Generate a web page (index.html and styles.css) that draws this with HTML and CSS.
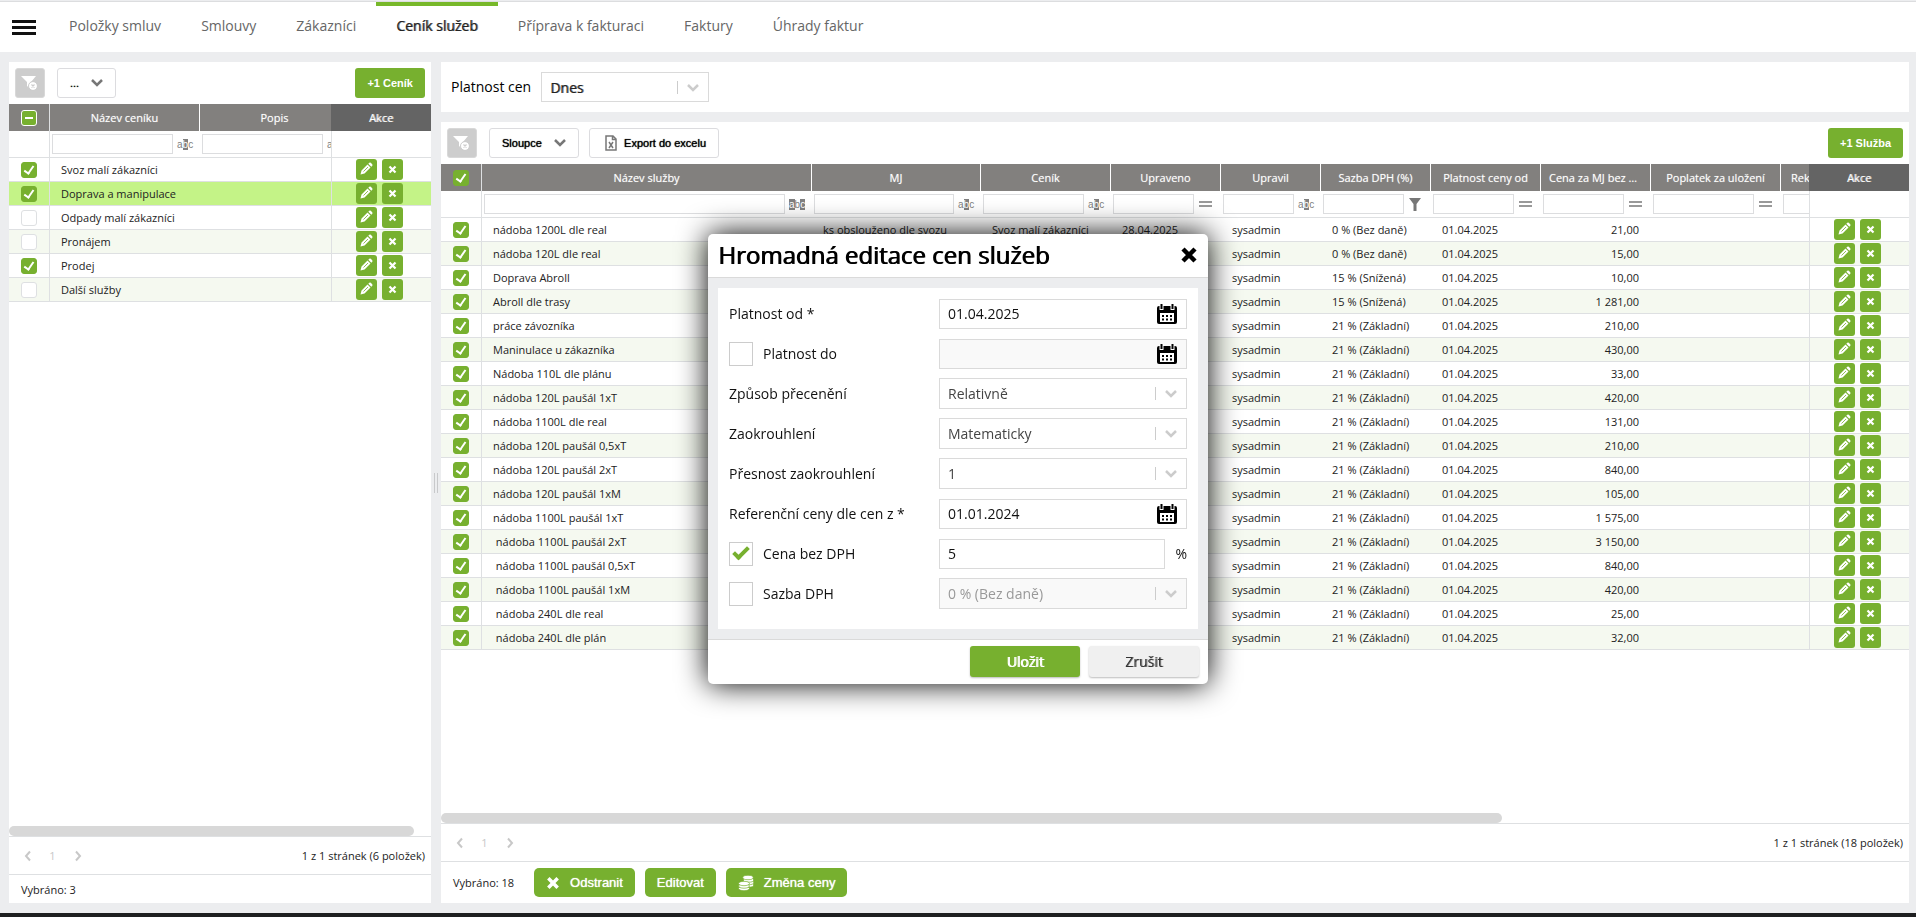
FILE: index.html
```html
<!DOCTYPE html>
<html lang="cs">
<head>
<meta charset="utf-8">
<title>Ceník služeb</title>
<link rel="stylesheet" href="styles.css">
</head>
<body>
<svg class="sprite" aria-hidden="true">
  <symbol id="i-pencil" viewBox="0 0 21 21"><path d="M4.500 15.500l1-4 6-6 3 3-6 6zM12.300 4.700l1-1q.8-.5 1.500.1l1.400 1.400q.6.700.1 1.500l-1 1z" fill="#fff"/><path d="M7.500 12.500l4.500-4.500" stroke="#77b02f" stroke-width=".8"/></symbol>
  <symbol id="i-cross" viewBox="0 0 12 12"><path d="M2 2l8 8M10 2l-8 8" stroke="currentColor" stroke-width="3"/></symbol>
  <symbol id="i-chevron" viewBox="0 0 12 8"><path d="M1 1l5 5 5-5" fill="none" stroke="currentColor" stroke-width="2.500"/></symbol>
  <symbol id="i-left" viewBox="0 0 8 12"><path d="M6 1.500L2 6l4 4.500" fill="none" stroke="currentColor" stroke-width="2"/></symbol>
  <symbol id="i-right" viewBox="0 0 8 12"><path d="M2 1.500L6 6l-4 4.500" fill="none" stroke="currentColor" stroke-width="2"/></symbol>
  <symbol id="i-clear" viewBox="0 0 18 16"><path d="M0 1h15l-5 6v7l-4-3V7z" fill="#fff"/><circle cx="12" cy="11" r="4" fill="#fff"/><circle cx="12" cy="11" r="4.500" fill="none" stroke="#cdcdcd"/><path d="M10.500 9.500l3 3m0-3l-3 3" stroke="#cdcdcd" stroke-width="1.200"/></symbol>
  <symbol id="i-funnel" viewBox="0 0 14 13" preserveAspectRatio="xMinYMid"><path d="M1 0h12L8.500 6v7h-3V6z" fill="#777"/></symbol>
  <symbol id="i-equals" viewBox="0 0 14 8" preserveAspectRatio="xMinYMid"><path d="M1 2h13M1 6h13" stroke="#999" stroke-width="2"/></symbol>
  <symbol id="i-excel" viewBox="0 0 12 16"><path d="M1 1h7l3 3v11H1zM7.500 1v3.500H11" fill="none" stroke="#777" stroke-width="1.500"/><path d="M4 7l4 6M8 7l-4 6" stroke="#777" stroke-width="1.500"/></symbol>
  <symbol id="i-coins" viewBox="0 0 16 16"><g fill="#fff" stroke="#77b02f" stroke-width=".7"><ellipse cx="10.500" cy="10" rx="5.200" ry="2.200"/><ellipse cx="10.500" cy="7.500" rx="5.200" ry="2.200"/><ellipse cx="10.500" cy="5" rx="5.200" ry="2.200"/><ellipse cx="10" cy="2.500" rx="5.200" ry="2.200"/><ellipse cx="6" cy="13.500" rx="5.500" ry="2.200"/><ellipse cx="6" cy="11" rx="5.500" ry="2.200"/><ellipse cx="6" cy="8.500" rx="5.500" ry="2.200"/></g></symbol>
  <symbol id="i-calendar" viewBox="0 0 20 20"><path d="M2 2h16q2 0 2 2v14q0 2-2 2H2q-2 0-2-2V4q0-2 2-2z"/><path d="M2.500 0h4v6h-4zM13.500 0h4v6h-4z" fill="#fff"/><path d="M3.500 0h2v5h-2zM14.500 0h2v5h-2z"/><path d="M3 9h14v9H3z" fill="#fff"/><path d="M5 11h2v2H5zm4 0h2v2H9zm4 0h2v2h-2zM5 14.500h2v2H5zm4 0h2v2H9zm4 0h2v2h-2z"/></symbol>
</svg>

<header class="topbar">
  <button class="menu" aria-label="Menu"><span></span><span></span><span></span></button>
  <nav class="tabs">
    <a href="#">Položky smluv</a>
    <a href="#">Smlouvy</a>
    <a href="#">Zákazníci</a>
    <a href="#" class="active" aria-current="page">Ceník služeb</a>
    <a href="#">Příprava k fakturaci</a>
    <a href="#">Faktury</a>
    <a href="#">Úhrady faktur</a>
  </nav>
</header>

<main class="workspace">
  <section class="panel sidebar">
    <div class="toolbar">
      <button class="clear" aria-label="Zrušit filtr" disabled><svg width="18" height="16"><use href="#i-clear"/></svg></button>
      <button class="drop compact">... <svg width="12" height="8"><use href="#i-chevron"/></svg></button>
      <button class="add">+1 Ceník</button>
    </div>
    <div class="gridbox">
      <div class="gridscroll">
        <table class="grid" id="pricelists">
          <colgroup><col class="w41"><col class="w150"><col class="w150"></colgroup>
          <thead>
            <tr><th><input type="checkbox" class="tick partial" aria-label="Vybrat vše"></th><th>Název ceníku</th><th>Popis</th></tr>
            <tr class="filters"><td></td>
              <td><div><input type="text" aria-label="Filtr Název ceníku"><i class="abc">a<b>b</b>c</i></div></td>
              <td><div><input type="text" aria-label="Filtr Popis"><i class="abc">a<b>b</b>c</i></div></td></tr>
          </thead>
          <tbody></tbody>
        </table>
      </div>
      <table class="grid actions" id="pricelist-actions">
        <thead><tr><th>Akce</th></tr><tr class="filters"><td></td></tr></thead>
        <tbody></tbody>
      </table>
    </div>
    <div class="scrollbar"><span class="thumb thumb-side"></span></div>
    <div class="pager">
      <button aria-label="Předchozí" disabled><svg width="8" height="12"><use href="#i-left"/></svg></button>
      <button disabled>1</button>
      <button aria-label="Další" disabled><svg width="8" height="12"><use href="#i-right"/></svg></button>
      <span>1 z 1 stránek (6 položek)</span>
    </div>
    <div class="selection short">Vybráno: 3</div>
  </section>

  <div class="splitter"><span></span></div>

  <div class="content">
    <section class="panel validity">
      <label for="validity">Platnost cen</label>
      <span class="select strong">
        <select id="validity"><option>Dnes</option></select>
        <svg width="12" height="8"><use href="#i-chevron"/></svg>
      </span>
    </section>
    <section class="panel services">
      <div class="toolbar">
        <button class="clear" aria-label="Zrušit filtr" disabled><svg width="18" height="16"><use href="#i-clear"/></svg></button>
        <button class="drop">Sloupce <svg width="12" height="8"><use href="#i-chevron"/></svg></button>
        <button class="drop export"><svg width="12" height="16"><use href="#i-excel"/></svg>Export do excelu</button>
        <button class="add">+1 Služba</button>
      </div>
      <div class="gridbox">
        <div class="gridscroll">
          <table class="grid" id="services">
            <colgroup><col class="w41"><col class="w330"><col class="w169"><col class="w130"><col class="w110"><col class="w100"><col class="w110"><col class="w110"><col class="w110"><col class="w130"><col class="w130"></colgroup>
            <thead>
              <tr><th><input type="checkbox" class="tick" checked aria-label="Vybrat vše"></th><th>Název služby</th><th>MJ</th><th>Ceník</th><th>Upraveno</th><th>Upravil</th><th>Sazba DPH (%)</th><th>Platnost ceny od</th><th>Cena za MJ bez DPH</th><th>Poplatek za uložení</th><th>Rekultivační poplatek</th></tr>
              <tr class="filters"><td></td>
                <td><div><input type="text" aria-label="Filtr Název služby"><i class="abc"><b>a</b>b<b>c</b></i></div></td>
                <td><div><input type="text" aria-label="Filtr MJ"><i class="abc">a<b>b</b>c</i></div></td>
                <td><div><input type="text" aria-label="Filtr Ceník"><i class="abc">a<b>b</b>c</i></div></td>
                <td><div><input type="text" aria-label="Filtr Upraveno"><svg width="14" height="8"><use href="#i-equals"/></svg></div></td>
                <td><div><input type="text" aria-label="Filtr Upravil"><i class="abc">a<b>b</b>c</i></div></td>
                <td><div><input type="text" aria-label="Filtr Sazba DPH"><svg width="14" height="13"><use href="#i-funnel"/></svg></div></td>
                <td><div><input type="text" aria-label="Filtr Platnost ceny od"><svg width="14" height="8"><use href="#i-equals"/></svg></div></td>
                <td><div><input type="text" aria-label="Filtr Cena za MJ"><svg width="14" height="8"><use href="#i-equals"/></svg></div></td>
                <td><div><input type="text" aria-label="Filtr Poplatek"><svg width="14" height="8"><use href="#i-equals"/></svg></div></td>
                <td><div><input type="text" aria-label="Filtr Rekultivační poplatek"></div></td></tr>
            </thead>
            <tbody></tbody>
          </table>
        </div>
        <table class="grid actions" id="service-actions">
          <thead><tr><th>Akce</th></tr><tr class="filters"><td></td></tr></thead>
          <tbody></tbody>
        </table>
      </div>
      <div class="scrollbar"><span class="thumb thumb-main"></span></div>
      <div class="pager">
        <button aria-label="Předchozí" disabled><svg width="8" height="12"><use href="#i-left"/></svg></button>
        <button disabled>1</button>
        <button aria-label="Další" disabled><svg width="8" height="12"><use href="#i-right"/></svg></button>
        <span>1 z 1 stránek (18 položek)</span>
      </div>
      <div class="selection">
        <span>Vybráno: 18</span>
        <button><svg width="14" height="14"><use href="#i-cross"/></svg>Odstranit</button>
        <button>Editovat</button>
        <button><svg width="16" height="16"><use href="#i-coins"/></svg>Změna ceny</button>
      </div>
    </section>
  </div>
</main>

<div class="overlay">
  <form class="modal" role="dialog" aria-labelledby="modal-title">
    <header>
      <h1 id="modal-title">Hromadná editace cen služeb</h1>
      <button type="button" class="close" aria-label="Zavřít"><svg width="18" height="18"><use href="#i-cross"/></svg></button>
    </header>
    <div class="modal-body">
      <div class="fields">
        <div class="field"><label for="from">Platnost od *</label>
          <span class="date"><input id="from" type="text" value="01.04.2025"><svg width="20" height="20"><use href="#i-calendar"/></svg></span></div>
        <div class="field"><label><input type="checkbox">Platnost do</label>
          <span class="date off"><input type="text" disabled aria-label="Platnost do"><svg width="20" height="20"><use href="#i-calendar"/></svg></span></div>
        <div class="field"><label for="mode">Způsob přecenění</label>
          <span class="select"><select id="mode"><option>Relativně</option></select><svg width="12" height="8"><use href="#i-chevron"/></svg></span></div>
        <div class="field"><label for="rounding">Zaokrouhlení</label>
          <span class="select"><select id="rounding"><option>Matematicky</option></select><svg width="12" height="8"><use href="#i-chevron"/></svg></span></div>
        <div class="field"><label for="precision">Přesnost zaokrouhlení</label>
          <span class="select"><select id="precision"><option>1</option></select><svg width="12" height="8"><use href="#i-chevron"/></svg></span></div>
        <div class="field"><label for="reference">Referenční ceny dle cen z *</label>
          <span class="date"><input id="reference" type="text" value="01.01.2024"><svg width="20" height="20"><use href="#i-calendar"/></svg></span></div>
        <div class="field"><label><input type="checkbox" checked>Cena bez DPH</label>
          <span class="percent"><input type="text" value="5" aria-label="Cena bez DPH"><span>%</span></span></div>
        <div class="field"><label><input type="checkbox">Sazba DPH</label>
          <span class="select off"><select disabled aria-label="Sazba DPH"><option>0 % (Bez daně)</option></select><svg width="12" height="8"><use href="#i-chevron"/></svg></span></div>
      </div>
    </div>
    <footer>
      <button type="button" class="save">Uložit</button>
      <button type="button" class="cancel">Zrušit</button>
    </footer>
  </form>
</div>
<script src="script.js"></script>
</body>
</html>
```
FILE: styles.css
```css
*, ::before { box-sizing: border-box; }
body {
  margin: 0;
  height: 100vh;
  display: flex;
  flex-direction: column;
  overflow: hidden;
  background: #ecedef;
  border-bottom: 4px solid #1e1f20;
  color: #222;
  font-family: "Open Sans", sans-serif;
  font-size: 14px;
}
button, input, select { font: inherit; color: inherit; margin: 0; }
button { border: 0; cursor: pointer; padding: 0; }
svg { display: block; flex: none; }
.sprite { position: absolute; width: 0; height: 0; }

.topbar {
  flex: none;
  display: flex;
  height: 51px;
  margin-top: 1px;
  border-top: 1px solid #dcdddf;
  background: #fff;
  padding-left: 12px;
}
.menu { width: 24px; margin-right: 13px; background: none; display: flex; flex-direction: column; gap: 3px; padding-top: 18px; }
.menu span { height: 3px; background: #111; }
.tabs { display: flex; }
.tabs a {
  padding: 7px 20px 0;
  border-top: 4px solid transparent;
  line-height: 26px;
  color: #666;
  text-decoration: none;
}
.tabs .active { border-color: #77b82a; color: #222; text-shadow: 1px 0 0 #2229; }

.workspace { flex: 1; min-height: 0; display: flex; padding: 10px 7px 10px 9px; }
.panel { background: #fff; }
.sidebar { width: 422px; display: flex; flex-direction: column; }
.content { flex: 1; min-width: 0; display: flex; flex-direction: column; gap: 10px; }
.services { flex: 1; min-height: 0; display: flex; flex-direction: column; }
.splitter { width: 10px; display: flex; align-items: center; justify-content: center; }
.splitter span { width: 4px; height: 20px; border: solid #c8c9cb; border-width: 0 1px; }

.validity { height: 50px; display: flex; align-items: center; gap: 10px; padding: 0 10px; color: #000; }
.validity .select { width: 168px; height: 30px; }
.validity label { line-height: 18px; padding-bottom: 1px; }

.toolbar { height: 42px; flex: none; display: flex; align-items: center; padding: 0 6px; font-family: "Liberation Sans", Arial, sans-serif; font-size: 11px; }
.toolbar button { height: 30px; border-radius: 3px; }
.clear { width: 30px; margin-right: 12px; background: #cdcdcd; border: 1px solid #d8d8d8; display: flex; align-items: center; justify-content: center; }
.drop { width: 90px; margin-right: 10px; padding: 0 12px; background: #fff; border: 1px solid #dcdcdf; display: flex; align-items: center; justify-content: space-between; color: #000; text-shadow: 0 0 1px #000; }
.drop svg { color: #777; }
.compact { width: 59px; }
.export { width: 130px; padding: 0 12px 0 15px; }
.add { margin-left: auto; padding: 0 12px; background: #77b02f; color: #fff; font-weight: bold; }

.gridbox { flex: 1; min-height: 0; display: flex; align-items: flex-start; }
.gridscroll { flex: 1; min-width: 0; overflow: hidden; }
.grid { table-layout: fixed; width: 0; border-collapse: separate; border-spacing: 0; font-size: 11px; }
.w41 { width: 41px; } .w100 { width: 100px; } .w110 { width: 110px; } .w130 { width: 130px; }
.w150 { width: 150px; } .w169 { width: 169px; } .w330 { width: 330px; }
.grid th { height: 27px; padding: 0 8px; background: #82807e; color: #fff; font-weight: normal; border-right: 1px solid #fff; overflow: hidden; white-space: nowrap; text-overflow: ellipsis; text-align: center; text-shadow: 0 0 1px #ffffff80; }
.grid td { height: 24px; padding: 0 12px 0 11px; border-bottom: 1px solid #dee0e2; white-space: nowrap; overflow: hidden; }
.grid tr > :first-child { padding: 0; text-align: center; border-right: 1px solid #dee0e2; }
.grid .filters td { height: 27px; padding: 0 0 0 2px; }
.filters div { display: flex; align-items: center; gap: 4px; }
.filters input { flex: 1; min-width: 0; height: 20px; border: 1px solid #dcdddf; background: #fff; }
.filters svg { width: 23px; }
.abc { width: 23px; font: 10px/11px "Liberation Sans", Arial, sans-serif; color: #808080; }
.abc b { background: #808080; color: #fff; font-weight: normal; }
.grid tbody tr:nth-child(even) td { background: #f5f9f0; }
.grid tbody tr.current td { background: #c4f387; }
.grid .num { text-align: right; }
.grid .name { white-space: pre; }
.grid.actions { flex: none; width: 100px; }
.grid.actions th { background: #646464; border: 0; text-shadow: 1px 0 0 #fff9; }
.grid.actions tr > td:first-child { border-right: 0; border-left: 1px solid #dee0e2; }
.ops { display: flex; gap: 5px; padding-left: 24px; margin-bottom: 1px; }
.ops button { width: 21px; height: 21px; border-radius: 3px; background: #77b02f; color: #fff; display: flex; align-items: center; justify-content: center; }

.tick { appearance: none; display: block; width: 16px; height: 16px; margin: 0 auto; border: 1px solid #dee0e2; border-radius: 3px; background: #fff; }
.tick:checked { border-color: #77b02f; background: #77b02f; }
.tick:checked::before { content: ""; display: block; width: 6px; height: 10px; margin: 1px auto 0; border: solid #fff; border-width: 0 2px 2px 0; transform: rotate(35deg); }
.tick.partial { background: #77b02f; border-color: #fff; }
.tick.partial::before { content: ""; display: block; width: 8px; height: 2px; margin: 6px auto 0; background: #fff; }

.scrollbar { flex: none; border-bottom: 1px solid #dee0e2; }
.thumb { display: block; height: 10px; border-radius: 5px; background: #d8d8d8; }
.thumb-side { width: 96%; }
.thumb-main { width: 72.3%; }
.pager { flex: none; height: 38px; display: flex; align-items: center; padding: 0 6px; border-bottom: 1px solid #dee0e2; font-size: 11px; }
.pager button { width: 25px; background: none; color: #c8c8c8; display: flex; justify-content: center; }
.pager span { margin-left: auto; }
.selection { flex: none; height: 41px; display: flex; align-items: center; gap: 10px; padding: 0 12px; font-size: 11px; }
.selection.short { height: 28px; }
.selection span { margin-right: 10px; }
.selection button { height: 29px; padding: 0 12px; border-radius: 5px; background: #77b02f; color: #fff; display: flex; align-items: center; gap: 10px; font-family: "Liberation Sans", Arial, sans-serif; font-size: 13px; text-shadow: 0 0 1px #fff; }

.select, .date { display: grid; align-items: center; border: 1px solid #dadada; background: #fff; }
.select > *, .date > * { grid-area: 1 / 1; }
.select select { appearance: none; width: 100%; height: 100%; border: 0; background: none; padding: 0 8px; color: #444; opacity: 1; }
.select svg { width: 31px; height: 13px; justify-self: end; border-left: 1px solid #ccc; color: #ccc; padding: 3px 9px 2px; pointer-events: none; }
.select.strong select { color: #222; text-shadow: 1px 0 0 #2229; }
.select.off { background: #f9f9f9; }
.select.off select { color: #999; }
.date svg { justify-self: end; margin-right: 9px; pointer-events: none; }
.date input { width: 100%; height: 28px; border: 0; background: none; padding: 0 8px; color: #111; }
.date.off { background: #f9f9f9; }

.overlay { position: fixed; inset: 0; display: flex; align-items: center; justify-content: center; }
.modal { width: 500px; border-radius: 5px; background: #fff; box-shadow: 0 0 30px #000; overflow: hidden; color: #111; }
.modal header { height: 44px; padding: 0 10px; border-bottom: 1px solid #dadada; display: flex; align-items: center; justify-content: space-between; }
.modal h1 { margin: 0; color: #000; font-size: 24px; line-height: 36px; font-weight: normal; text-shadow: 1px 0 0 #000; }
.close { background: none; color: #000; }
.modal-body { padding: 10px; background: #ecedef; }
.fields { padding: 6px 11px 15px; background: #fff; }
.field { height: 40px; display: grid; grid-template-columns: 210px 1fr; align-items: center; }
.field label { display: flex; align-items: center; gap: 10px; }
.field label input { appearance: none; width: 24px; height: 24px; border: 1px solid #ccc; background: #fff; }
.field label input:checked::before { content: ""; display: block; width: 16px; height: 9px; margin: 4px auto 0; border: solid #77b02f; border-width: 0 0 4px 4px; transform: rotate(-45deg); }
.field .select { height: 31px; }
.percent { display: flex; align-items: center; gap: 10px; }
.percent input { flex: 1; min-width: 0; height: 30px; border: 1px solid #dadada; background: #fff; padding: 0 8px; }
.modal footer { height: 45px; padding: 0 9px; border-top: 1px solid #dadada; display: flex; justify-content: flex-end; align-items: center; gap: 9px; }
.modal footer button { width: 110px; height: 31px; border-radius: 3px; box-shadow: 0 1px 2px #0004; }
.modal .save { background: #77b02f; color: #fff; text-shadow: 1px 0 0 #fff; }
.modal .cancel { background: #f0f0f0; color: #333; text-shadow: 1px 0 0 #3339; }
```
FILE: script.js
```js
const pricelists = [
  ["Svoz malí zákazníci", true],
  ["Doprava a manipulace", true],
  ["Odpady malí zákazníci", false],
  ["Pronájem", false],
  ["Prodej", true],
  ["Další služby", false],
];
const currentPricelist = 1;

const free = "0 % (Bez daně)", reduced = "15 % (Snížená)", base = "21 % (Základní)";
const services = [
  ["nádoba 1200L dle real", free, "21,00", "ks obslouženo dle svozu"],
  ["nádoba 120L dle real", free, "15,00", ""],
  ["Doprava Abroll", reduced, "10,00", ""],
  ["Abroll dle trasy", reduced, "1 281,00", ""],
  ["práce závozníka", base, "210,00", ""],
  ["Maninulace u zákazníka", base, "430,00", ""],
  ["Nádoba 110L dle plánu", base, "33,00", ""],
  ["nádoba 120L paušál 1xT", base, "420,00", ""],
  ["nádoba 1100L dle real", base, "131,00", ""],
  ["nádoba 120L paušál 0,5xT", base, "210,00", ""],
  ["nádoba 120L paušál 2xT", base, "840,00", ""],
  ["nádoba 120L paušál 1xM", base, "105,00", ""],
  ["nádoba 1100L paušál 1xT", base, "1 575,00", ""],
  [" nádoba 1100L paušál 2xT", base, "3 150,00", ""],
  [" nádoba 1100L paušál 0,5xT", base, "840,00", ""],
  [" nádoba 1100L paušál 1xM", base, "420,00", ""],
  [" nádoba 240L dle real", base, "25,00", ""],
  [" nádoba 240L dle plán", base, "32,00", ""],
];

const tick = (name, on) =>
  `<td><input type="checkbox" class="tick" aria-label="${name.trim()}"${on ? " checked" : ""}></td>`;
const ops = `<td><div class="ops">
  <button aria-label="Upravit"><svg width="21" height="21"><use href="#i-pencil"/></svg></button>
  <button aria-label="Smazat"><svg width="9" height="9"><use href="#i-cross"/></svg></button></div></td>`;
const fill = (id, rows) => {
  document.querySelector(`#${id} tbody`).innerHTML = rows.join("");
};
const rowClass = (i) => (i === currentPricelist ? ' class="current"' : "");

fill("pricelists", pricelists.map(([name, on], i) =>
  `<tr${rowClass(i)}>${tick(name, on)}<td class="name">${name}</td><td></td></tr>`));
fill("pricelist-actions", pricelists.map((_, i) => `<tr${rowClass(i)}>${ops}</tr>`));

fill("services", services.map(([name, vat, price, unit]) =>
  `<tr>${tick(name, true)}<td class="name">${name}</td><td>${unit}</td><td>${unit && "Svoz malí zákazníci"}</td>
   <td>${unit && "28.04.2025"}</td><td>sysadmin</td><td>${vat}</td><td>01.04.2025</td>
   <td class="num">${price}</td><td></td><td></td></tr>`));
fill("service-actions", services.map(() => `<tr>${ops}</tr>`));
```
